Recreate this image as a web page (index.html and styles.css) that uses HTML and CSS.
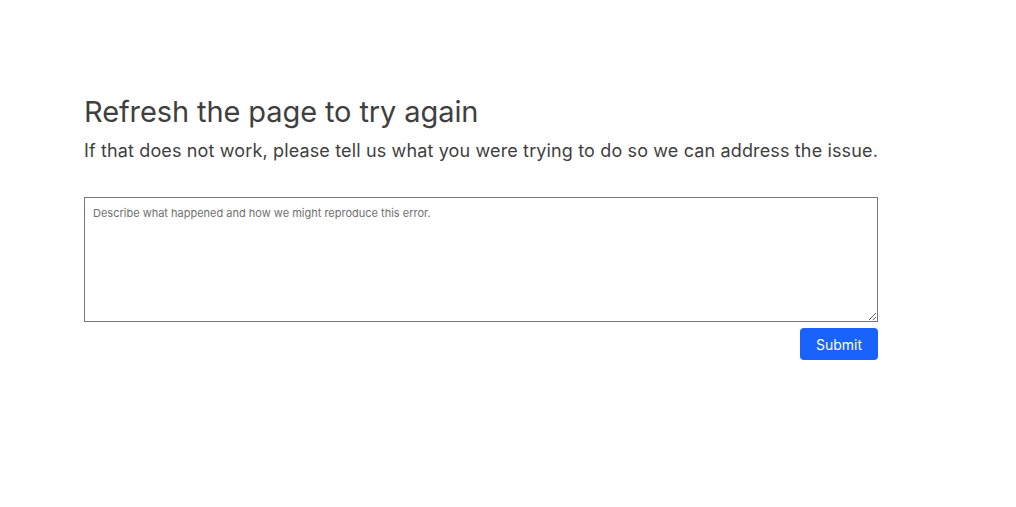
FILE: index.html
```html
<!DOCTYPE html>
<html>
<head>
<meta charset="utf-8">
<link rel="stylesheet" href="styles.css">
</head>
<body>
<main class="page">
  <h1 class="title">Refresh the page to try again</h1>
  <p class="subtitle">If that does not work, please tell us what you were trying to do so we can address the issue.</p>
  <form class="feedback">
    <textarea class="box" placeholder="Describe what happened and how we might reproduce this error."></textarea>
    <div class="actions">
      <button type="button" class="submit">Submit</button>
    </div>
  </form>
</main>
</body>
</html>
```
FILE: styles.css
```css
html, body {
  margin: 0;
  padding: 0;
  background: #fff;
}
body {
  font-family: Inter, "Noto Sans", sans-serif;
  color: #3d3d3d;
}
.page {
  width: 794px;
  padding: 92px 0 0 84px;
}
.title {
  margin: 0;
  font-size: 29px;
  font-weight: 400;
  line-height: 40px;
  letter-spacing: -0.1px;
  color: #3f3f3f;
}
.subtitle {
  margin: 6px 0 0;
  font-size: 18px;
  line-height: 26px;
  letter-spacing: 0.14px;
  white-space: nowrap;
  color: #3f3f3f;
}
.feedback {
  margin-top: 33px;
  display: flex;
  flex-direction: column;
}
.box {
  box-sizing: border-box;
  width: 794px;
  height: 125px;
  border: 1px solid #777;
  border-radius: 0;
  padding: 8px 8px;
  font-family: Inter, "Noto Sans", sans-serif;
  font-size: 11px;
  margin: 0;
  display: block;
}
.box::placeholder {
  color: #707070;
}
.actions {
  display: flex;
  justify-content: flex-end;
  margin-top: 6px;
}
.submit {
  width: 78px;
  height: 32px;
  border: none;
  border-radius: 4px;
  background: #1a62fc;
  color: #fff;
  font-family: Inter, "Noto Sans", sans-serif;
  font-size: 14px;
  padding: 0;
}
```
